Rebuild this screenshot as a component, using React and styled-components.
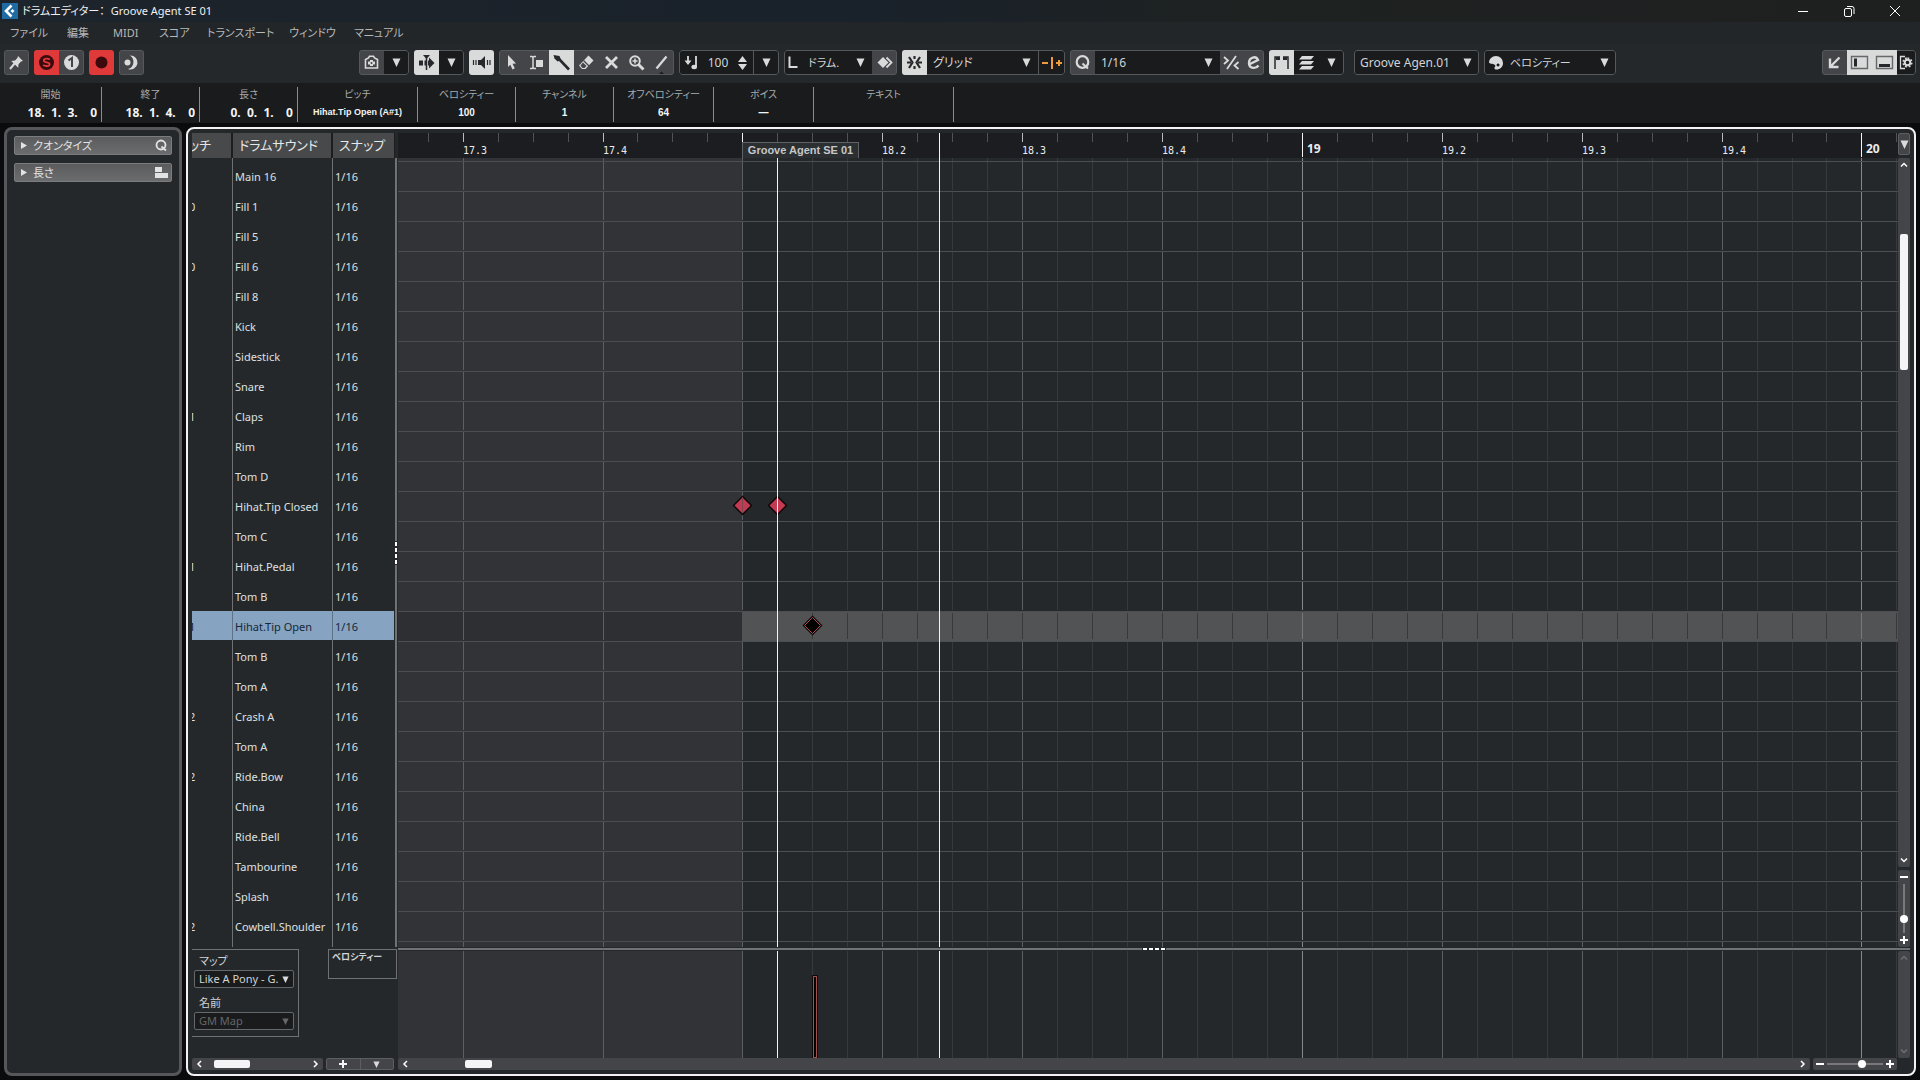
import React from "react";
import styled, { createGlobalStyle, css } from "styled-components";

const color = {
  page: "#0a0b0d",
  chrome: "#25282b",
  info: "#191b1c",
  panel: "#24282b",
  field: "#191b1d",
  button: "#434548",
  edge: "#56595b",
  light: "#d9dada",
  white: "#f5f5f7",
  text: "#d2d3d4",
  muted: "#a9abac",
  red: "#e0393a",
  orange: "#f09a3e",
  ruler: "#1b1d20",
  shaded: "#323336",
  rowLine: "#4c4f51",
  subLine: "#363a3c",
  beatLine: "#5b5f61",
  barLine: "#85888a",
  select: "#86a3c1",
};

const Global = createGlobalStyle`
  * { box-sizing: border-box; }
  body {
    margin: 0;
    background: ${color.page};
    color: ${color.text};
    font-family: "Noto Sans", "Noto Sans CJK JP", sans-serif;
    font-size: 12px;
    line-height: 16px;
    font-feature-settings: "palt";
  }
  button, input, select { font: inherit; font-feature-settings: inherit; color: inherit; margin: 0; padding: 0; }
  button { border: 0; background: none; }
`;

const Window = styled.div`
  min-height: 100vh;
  display: flex;
  flex-direction: column;
`;

/* ---------- title bar and menu ---------- */

const TitleBar = styled.header`
  height: 22px;
  display: flex;
  align-items: center;
  gap: 4px;
  padding: 0 2px;
  background: linear-gradient(90deg, #1d242b, #19212a 45%, #1e2221 65%, #1e2020);
`;

const Title = styled.h1`
  flex: 1;
  display: flex;
  gap: 6px;
  margin: 0;
  font-size: 11px;
  font-weight: 400;
  color: #f0f0f0;
`;

const WindowButtons = styled.div`
  display: flex;
`;

const WindowButton = styled.button`
  width: 46px;
  height: 22px;
  display: grid;
  place-items: center;
`;

const MenuBar = styled.nav`
  height: 22px;
  display: flex;
  align-items: center;
  padding-left: 10px;
  background: #222629;
`;

const MenuButton = styled.button`
  width: ${(p) => p.$w}px;
  text-align: left;
  white-space: nowrap;
  font-size: 11px;
  color: #b6b8b9;
`;

/* ---------- toolbar ---------- */

const Toolbar = styled.div`
  height: 39px;
  display: flex;
  align-items: flex-start;
  padding: 6px 4px 0;
  background: ${color.chrome};
`;

const Tools = styled.div`
  display: flex;
  gap: 5px;
  margin-left: ${(p) => p.$before || 0}px;
`;

const Spacer = styled.div`
  flex: 1;
`;

const Group = styled.div`
  height: 25px;
  width: ${(p) => (p.$w ? p.$w + "px" : "auto")};
  display: flex;
  position: relative;
  overflow: hidden;
  border-radius: 3px;
  background: ${color.field};

  &::after {
    content: "";
    position: absolute;
    inset: 0;
    border: 1px solid ${color.edge};
    border-radius: 3px;
    pointer-events: none;
    display: ${(p) => (p.$bare ? "none" : "block")};
  }
`;

const tones = {
  plain: css`background: ${color.button}; color: ${color.light};`,
  on: css`background: ${color.light}; color: #26292b; position: relative; z-index: 1;`,
  red: css`background: ${color.red}; color: #3a0a0c; position: relative; z-index: 1;`,
  dark: css`background: ${color.field}; color: ${color.light};`,
  orange: css`background: ${color.field}; color: ${color.orange}; border-left: 1px solid ${color.edge};`,
};

const ToolButton = styled.button`
  flex: 0 0 ${(p) => p.$w || 25}px;
  height: 25px;
  display: grid;
  place-items: center;
  ${(p) => tones[p.$tone || "plain"]}
  ${(p) => p.$divided && css`border-left: 1px solid ${color.edge};`}

  svg { display: block; }
`;

const SelectWrap = styled.div`
  flex: 1;
  min-width: 0;
  display: grid;
  align-items: center;
  opacity: ${(p) => (p.$off ? 0.4 : 1)};

  > * { grid-area: 1 / 1; }
  > svg { justify-self: end; margin-right: ${(p) => p.$arrow || 7}px; pointer-events: none; }
`;

const SelectBox = styled.select`
  width: 100%;
  height: 100%;
  appearance: none;
  border: 0;
  outline: 0;
  background: transparent;
  padding-left: ${(p) => p.$pad || 6}px;
  font-size: ${(p) => p.$size || 12}px;
  opacity: 1;
`;

const VelocityInput = styled.input`
  width: 28px;
  border: 0;
  background: transparent;
  text-align: center;
`;

/* ---------- info line ---------- */

const InfoLine = styled.div`
  height: 40px;
  padding: 4px 0 1px;
  display: flex;
  background: ${color.info};
`;

const InfoField = styled.label`
  width: ${(p) => p.$w}px;
  border-right: 1px solid #8a8c8d;
  display: flex;
  flex-direction: column;
  align-items: center;
  color: ${color.muted};
  font-size: 10px;
  line-height: 15px;
`;

const InfoValue = styled.input`
  width: 100%;
  height: 20px;
  border: 0;
  background: transparent;
  padding-right: ${(p) => (p.$time ? 4 : 0)}px;
  text-align: ${(p) => (p.$time ? "right" : "center")};
  font-family: ${(p) => (p.$time ? `"Noto Sans"` : `"Liberation Sans"`)}, sans-serif;
  font-size: ${(p) => (p.$time ? 12 : p.$small ? 9 : 10)}px;
  font-weight: 700;
  color: #f4f4f4;
`;

/* ---------- work area ---------- */

const Work = styled.div`
  flex: 1;
  display: flex;
  gap: 4px;
  padding: 4px;
`;

const Inspector = styled.aside`
  width: 178px;
  border: 3px solid #55575a;
  border-radius: 8px;
  background: ${color.panel};
  padding: 6px 7px;
  display: flex;
  flex-direction: column;
  gap: 8px;
`;

const Section = styled.button`
  height: 19px;
  border: 1px solid #7a7c7e;
  border-radius: 2px;
  background: linear-gradient(#5a5c5e, #6a6c6e);
  display: flex;
  align-items: center;
  gap: 6px;
  padding: 0 3px 0 6px;
  color: #e2e3e4;
  font-size: 11px;
  line-height: 16px;

  span { flex: 1; text-align: left; }
`;

const Editor = styled.main`
  flex: 1;
  min-width: 0;
  border: 2px solid #f3f1f4;
  border-radius: 8px;
  background: ${color.panel};
  padding: 4px;
  display: grid;
  grid-template-columns: 203px 3px minmax(0, 1fr) 12px;
  grid-template-rows: 25px minmax(0, 1fr) 4px 107px 12px;
`;

const ListPane = styled.section`
  grid-column: 1;
  grid-row: 1 / 3;
  overflow: hidden;
  background:
    linear-gradient(#6f7173, #6f7173) 40px 0 / 1px 100% no-repeat,
    linear-gradient(#6f7173, #6f7173) 140px 0 / 1px 100% no-repeat;
`;

const DrumTable = styled.table`
  width: 100%;
  table-layout: fixed;
  border-collapse: separate;
  border-spacing: 0;
  font-size: 11px;
`;

const HeadCell = styled.th`
  width: ${(p) => p.$w}px;
  height: 28px;
  padding: 0;
  vertical-align: top;
  text-align: left;
  font-weight: 400;
`;

const HeadLabel = styled.div`
  height: 25px;
  overflow: hidden;
  padding-left: ${(p) => p.$pad}px;
  border-right: 1px solid #1b1d1f;
  border-left: ${(p) => (p.$first ? 0 : 1)}px solid #1b1d1f;
  background: #47494b;
  font-size: 13px;
  line-height: 24px;
  white-space: nowrap;
  color: #e6e7e8;
`;

/* The pitch column is scrolled to the left, so its texts start outside it. */
const Scrolled = styled.span`
  display: block;
  margin-left: -3px;
`;

const DrumRow = styled.tr`
  height: 30px;
  color: ${(p) => (p.$on ? "#14273a" : "#dfe0e1")};

  td {
    padding: 3px 0 0 2px;
    overflow: hidden;
    border-left: 1px solid ${(p) => (p.$on ? "#5f7387" : "transparent")};
    border-bottom: 1px solid transparent;
    background: ${(p) => (p.$on ? color.select : "transparent")};
    background-clip: padding-box;
    white-space: nowrap;
  }
  td:first-child { padding-left: 0; border-left: 0; }
  td:last-child { border-right: 1px solid transparent; }
`;

const SideSplitter = styled.div`
  grid-column: 2;
  grid-row: 2;
  border-left: 2px solid #707375;
  display: flex;
  flex-direction: column;
  justify-content: center;
  gap: 2px;
`;

const LaneSplitter = styled.div`
  grid-column: 3 / 5;
  grid-row: 3;
  display: flex;
  align-items: center;
  justify-content: center;
  gap: 2px;
  background: linear-gradient(#6f7375, #6f7375) 0 1px / 100% 2px no-repeat;
`;

const GripDot = styled.i`
  width: ${(p) => (p.$tall ? 2 : 4)}px;
  height: ${(p) => (p.$tall ? 4 : 2)}px;
  margin-left: ${(p) => (p.$tall ? -2 : 0)}px;
  background: #fff;
  box-shadow: 0 0 0 1px ${color.panel};
`;

const Ruler = styled.div`
  grid-column: 3;
  grid-row: 1;
  position: relative;
  overflow: hidden;
  background: ${color.ruler};
`;

const RulerMark = styled.span`
  position: absolute;
  top: ${(p) => (p.$bar ? 9 : 11)}px;
  font-family: ${(p) => (p.$bar ? `"Noto Sans"` : `"DejaVu Sans Mono"`)}, monospace;
  font-size: ${(p) => (p.$bar ? 12 : 10)}px;
  font-weight: ${(p) => (p.$bar ? 700 : 400)};
  line-height: 14px;
  color: #ececee;
`;

const PartLabel = styled.div`
  position: absolute;
  top: 9px;
  width: 117px;
  height: 16px;
  border: 1px solid #5f6264;
  border-bottom: 0;
  background: #2b2f31;
  font-family: "Liberation Sans", sans-serif;
  font-size: 11px;
  font-weight: 700;
  line-height: 15px;
  text-align: center;
  white-space: nowrap;
  color: #c5c7c8;
`;

const Canvas = styled.svg`
  grid-column: 3;
  grid-row: ${(p) => p.$row};
  display: block;
  width: 100%;
  height: 100%;
  overflow: hidden;
`;

const RulerTicks = styled.svg`
  display: block;
  width: 100%;
  height: 25px;
`;

const MapPane = styled.section`
  grid-column: 1 / 3;
  grid-row: 3 / 5;
  padding-top: 2px;
  display: flex;
  align-items: flex-start;
  justify-content: space-between;
`;

const MapBox = styled.div`
  width: 107px;
  height: 88px;
  border: 1px solid #6f7173;
  border-left: 0;
  padding: 2px 4px 0 2px;
  display: flex;
  flex-direction: column;
`;

const MapLabel = styled.label`
  padding-left: 5px;
  height: 18px;
  line-height: 18px;
  font-size: 11px;
`;

const MapField = styled.div`
  display: flex;
  height: 19px;
  margin-bottom: 6px;
  border: 1px solid #66696b;
  border-radius: 2px;
  background: ${color.field};
`;

const LaneBox = styled.div`
  width: 69px;
  height: 30px;
  margin-right: 1px;
  border: 1px solid #6f7173;
  padding-left: 3px;
  font-size: 9px;
  line-height: 14px;
  font-weight: 700;
`;

/* ---------- scroll bars and zoom ---------- */

const SideColumn = styled.div`
  grid-column: 4;
  grid-row: ${(p) => p.$row};
  display: flex;
  flex-direction: column;
  gap: 3px;
`;

const MenuDrop = styled.button`
  height: 22px;
  border: 1px solid #5c5e60;
  border-radius: 2px;
  background: ${color.button};
  color: ${color.light};
  display: grid;
  place-items: center;
`;

const ScrollV = styled.div`
  flex: 1;
  min-height: 0;
  display: flex;
  flex-direction: column;
  background: ${color.button};
  border-radius: 2px;
  color: ${(p) => (p.$off ? "#6d7072" : "#fff")};
`;

const ScrollH = styled.div`
  flex: ${(p) => (p.$w ? `0 0 ${p.$w}px` : 1)};
  display: flex;
  align-items: center;
  background: ${color.button};
  border-radius: 2px;
  color: #fff;
`;

const ScrollButton = styled.button`
  flex: 0 0 14px;
  display: grid;
  place-items: center;
`;

const Track = styled.div`
  flex: 1;
  min-width: 0;
  min-height: 0;
  display: flex;
  flex-direction: ${(p) => (p.$v ? "column" : "row")};
  align-items: center;

  &::before { content: ""; flex: 0 0 ${(p) => p.$start}; }
`;

const Thumb = styled.div`
  flex: 0 0 ${(p) => p.$size};
  ${(p) => (p.$v ? "width" : "height")}: 8px;
  border-radius: 2px;
  background: ${color.white};
`;

const FootLeft = styled.div`
  grid-column: 1 / 3;
  grid-row: 5;
  display: flex;
  gap: 3px;
  padding-right: 4px;
`;

const FootRight = styled.div`
  grid-column: 3 / 5;
  grid-row: 5;
  display: flex;
  gap: 3px;
  padding-right: 13px;
`;

const LaneButtons = styled.div`
  flex: 1;
  display: flex;
  border: 1px solid #5c5e60;
  border-radius: 2px;
  background: ${color.button};
  color: ${color.white};

  button { flex: 1; display: grid; place-items: center; }
  button + button { border-left: 1px solid #5c5e60; }
`;

const Zoom = styled.div`
  flex: 0 0 ${(p) => (p.$v ? 77 : 84)}px;
  min-width: 0;
  min-height: 0;
  display: flex;
  flex-direction: ${(p) => (p.$v ? "column" : "row")};
  align-items: center;
  background: ${color.button};
  border-radius: 2px;
  color: #fff;
`;

const ZoomRange = styled.input`
  flex: 1;
  min-width: 0;
  min-height: 0;
  appearance: none;
  background: transparent;
  ${(p) =>
    p.$v
      ? css`writing-mode: vertical-lr; width: 12px;`
      : css`width: 56px; height: 12px;`}

  &::-webkit-slider-runnable-track {
    background: #77797b;
    ${(p) => (p.$v ? "width" : "height")}: 2px;
  }
  &::-webkit-slider-thumb {
    appearance: none;
    width: 8px;
    height: 8px;
    border-radius: 50%;
    background: #fff;
    ${(p) => (p.$v ? "margin-left" : "margin-top")}: -3px;
  }
`;

/* ---------- icons ---------- */

const Arrow = ({ small }) => (
  <svg width={small ? 7 : 9} height={small ? 7 : 9} viewBox="0 0 9 9" fill={color.light}>
    <path d="M0.5 0.5h8L4.5 9z" />
  </svg>
);

const Icon = ({ children, w = 25 }) => (
  <svg width={w} height="25" viewBox={`0 0 ${w} 25`} fill="none" stroke="currentColor" strokeWidth="2">
    {children}
  </svg>
);

const icons = {
  pin: (
    <Icon>
      <path d="M6 19l5-6" />
      <path fill="currentColor" stroke="none" d="M14 6l5 5-2 .6-2.5 2.6-.3 3.6-7-6.8 3.8-.4L13.4 8z" />
    </Icon>
  ),
  solo: (
    <Icon>
      <circle cx="12.5" cy="12.500" r="7.500" fill="currentColor" stroke="none" />
      <path stroke={color.red} strokeWidth="1.800" d="M15.800 9.600c-1-1.200-6-1.700-6 .8 0 2.600 5.800 1.300 5.800 3.800 0 2.400-5 2.200-6.400.7" />
    </Icon>
  ),
  one: (
    <Icon>
      <circle cx="12.5" cy="12.500" r="7.500" fill="currentColor" stroke="none" />
      <path stroke={color.button} d="M9.500 10.500l3.500-2.500v9" />
    </Icon>
  ),
  record: <Icon><circle cx="12.5" cy="12.500" r="6" fill="currentColor" stroke="none" /></Icon>,
  moon: (
    <Icon>
      <path fill="currentColor" stroke="none" d="M11 5.500a7 7 0 1 1-2 13.500 7.500 7.500 0 0 0 2-13.500z" />
      <circle cx="8.5" cy="12.500" r="3" fill="currentColor" stroke="none" />
    </Icon>
  ),
  camera: (
    <Icon>
      <path strokeWidth="1.600" d="M6.500 18V9.500l3-1.500 1-1.800h4l1 1.800 3 1.500V18z" />
      <path strokeWidth="3" strokeDasharray="3 1" d="M9 13h7" />
      <path strokeWidth="3" d="M12.500 10v6" />
      <circle cx="12.5" cy="13" r="1" fill={color.button} stroke="none" />
    </Icon>
  ),
  autoscroll: (
    <Icon>
      <path strokeWidth="5" d="M5 13h4M10.500 13h1.500M14 13h2" />
      <path fill="currentColor" stroke="none" d="M15 7.500l5.500 5.500-5.500 5.500z" />
      <path fill="currentColor" stroke="none" d="M9 5h7l-3.500 4z" />
      <path strokeWidth="1.500" d="M12.500 7v13" />
    </Icon>
  ),
  speaker: (
    <Icon>
      <path strokeWidth="1.200" d="M4.500 10v5M7 10v5M18.500 10v5M21 10v5" />
      <path fill="currentColor" stroke="none" d="M9 10h3l4-4v13l-4-4H9z" />
    </Icon>
  ),
  pointer: <Icon><path fill="currentColor" stroke="none" d="M9 5l8 8.500-3.500.3 2.300 4.500-2.300 1.100-2.200-4.600L9 17z" /></Icon>,
  range: (
    <Icon>
      <path strokeWidth="1.500" d="M6 6.500h2l1 1 1-1h2M6 18.500h2l1-1 1 1h2M9 7v11" />
      <path fill="currentColor" stroke="none" d="M12 10h7v7h-7z" />
    </Icon>
  ),
  draw: (
    <Icon>
      <path strokeWidth="2.600" d="M10 9l10 10.500" />
      <path fill="currentColor" stroke="none" d="M4.500 5l6 1 1.500 4-3.500 1.500-3-3z" />
    </Icon>
  ),
  erase: (
    <Icon>
      <path fill="currentColor" stroke="none" d="M14.500 5.500l5 5-8 8.500H8l-3-3.500z" />
      <path stroke={color.button} strokeWidth="1.200" d="M9.500 10.500l5.500 5.500" />
      <path fill={color.button} stroke="none" d="M9 12.500l3.500 3.500-2 2h-2l-2-2.400z" />
    </Icon>
  ),
  mute: <Icon><path strokeWidth="2.800" d="M7 7l11 11M18 7L7 18" /></Icon>,
  zoom: (
    <Icon>
      <circle cx="11" cy="11" r="4.800" fill="none" />
      <path strokeWidth="1.600" d="M8.500 11h5M11 8.500v5" />
      <path strokeWidth="3" d="M14.500 14.500l5 5" />
    </Icon>
  ),
  line: (
    <Icon>
      <path strokeWidth="2.200" d="M7.500 18.500l10-12" />
      <path fill="#1b1d1f" stroke="none" d="M9 25l3.500-3.500L16 25z" />
    </Icon>
  ),
  velocity: (
    <Icon>
      <path strokeWidth="1.800" d="M9 6v6M17 6v11" />
      <path fill="currentColor" stroke="none" d="M5.500 10.500h7L9 15z" />
      <ellipse cx="15.200" cy="17" rx="2.800" ry="2.200" fill="currentColor" stroke="none" />
    </Icon>
  ),
  length: <Icon w={18}><path d="M5.500 6.500v10.500h8" /></Icon>,
  drumstick: (
    <Icon>
      <path fill="currentColor" stroke="none" d="M11 7l5.500 5.500L11 18l-5.500-5.500z" />
      <path strokeWidth="1.800" d="M14.500 7.500l5 5-5 5" />
    </Icon>
  ),
  snap: (
    <Icon>
      <path strokeWidth="2.200" d="M7 7l3.500 5.500L7 18M18 7l-3.500 5.500L18 18M12.500 6v3M12.500 16v3M5 12.500h4M16 12.500h4" />
    </Icon>
  ),
  snapType: (
    <Icon w={26}>
      <path d="M3 13h6M13 7v12M17 13h6M20 10v6" />
    </Icon>
  ),
  quantize: (
    <Icon>
      <circle cx="12.500" cy="12" r="5.800" strokeWidth="2.200" />
      <path d="M12.500 13.500l5.500 5" />
    </Icon>
  ),
  iq: (
    <Icon w={22}>
      <path strokeWidth="1.800" d="M16 6L7 19M4 7l4 3.500L4 14M18.500 12l-4 3.500 4 3.500" />
    </Icon>
  ),
  edit: (
    <Icon w={22}>
      <path strokeWidth="2.400" d="M7 14.500l9-4.500c-2-4.500-9-3-9 3 0 6 7 6 9.500 2.500" />
    </Icon>
  ),
  parts: (
    <Icon>
      <path strokeWidth="1.500" d="M6 19V7h5M19 19V7h-5" />
      <path strokeWidth="3" d="M7 8.500h4M18 8.500h-4" />
    </Icon>
  ),
  lanes: (
    <Icon>
      <path fill="currentColor" stroke="none" d="M8 6h12l-3 3.500H5zM8 11h12l-3 3.500H5zM8 16h12l-3 3.500H5z" />
    </Icon>
  ),
  palette: (
    <Icon w={22}>
      <path
        fill="currentColor"
        stroke="none"
        fillRule="evenodd"
        d="M12 6a7 7 0 0 1 7 7c0 4-3 6.500-6.500 6.500-3 0-2-2.500-1-3.500-1-3-5.500-1.500-6.500-3.500C5 9 8 6 12 6zM14 13.500a1.500 1.500 0 1 0 .1 0z"
      />
    </Icon>
  ),
  corner: <Icon><path strokeWidth="2.400" d="M17.500 7.500l-9 9M8 8.500V17h8.500" /></Icon>,
  leftZone: (
    <Icon>
      <path strokeWidth="1.400" stroke="#66686a" d="M4.500 6.500h16v12h-16z" />
      <path strokeWidth="3" d="M8.500 8.500v8" />
    </Icon>
  ),
  lowerZone: (
    <Icon>
      <path strokeWidth="1.400" stroke="#66686a" d="M4.500 6.500h16v12h-16z" />
      <path strokeWidth="3" d="M7 15.500h11" />
    </Icon>
  ),
  setup: (
    <Icon w={19}>
      <path strokeWidth="1.300" d="M8 6.500H3.500v12H8" />
      <circle cx="10.500" cy="12.500" r="2.800" />
      <path strokeWidth="1.600" strokeDasharray="1.800 1.700" d="M10.500 8.100a4.400 4.400 0 1 1-.1 0" />
    </Icon>
  ),
};

const Chevron = ({ dir }) => {
  const d = { left: "M6 1L3 4l3 3", right: "M2 1l3 3-3 3", up: "M1 5.500l3-3 3 3", down: "M1 2.500l3 3 3-3" }[dir];
  return (
    <svg width="8" height="8" viewBox="0 0 8 8" fill="none" stroke="currentColor" strokeWidth="1.500"><path d={d} /></svg>
  );
};

const Sign = ({ plus }) => (
  <svg width="8" height="8" viewBox="0 0 8 8" stroke="currentColor" strokeWidth="2">
    <path d={plus ? "M0 4h8M4 0v8" : "M0 4h8"} />
  </svg>
);

const Logo = () => (
  <svg width="16" height="16" viewBox="0 0 16 16">
    <rect width="16" height="16" fill="#1f6ba3" />
    <path d="M9.500 2.500L4 8l5.500 5.500" fill="none" stroke="#fff" strokeWidth="2.600" />
    <path d="M10.500 6l2 2-2 2-2-2z" fill="#fff" />
  </svg>
);

/* ---------- data ---------- */

const menus = [
  ["ファイル", 57],
  ["編集", 46],
  ["MIDI", 46],
  ["スコア", 48],
  ["トランスポート", 82],
  ["ウィンドウ", 65],
  ["マニュアル", 50],
];

const info = [
  { label: "開始", value: "18.  1.  3.    0", w: 102, time: true },
  { label: "終了", value: "18.  1.  4.    0", w: 98, time: true },
  { label: "長さ", value: "0.  0.  1.    0", w: 98, time: true },
  { label: "ピッチ", value: "Hihat.Tip Open (A#1)", w: 120, small: true },
  { label: "ベロシティー", value: "100", w: 98 },
  { label: "チャンネル", value: "1", w: 98 },
  { label: "オフベロシティー", value: "64", w: 100 },
  { label: "ボイス", value: "—", w: 100 },
  { label: "テキスト", value: "", w: 140 },
];

const drums = [
  ["", "Main 16"], ["0", "Fill 1"], ["", "Fill 5"], ["0", "Fill 6"], ["", "Fill 8"], ["", "Kick"],
  ["", "Sidestick"], ["", "Snare"], ["1", "Claps"], ["", "Rim"], ["", "Tom D"], ["", "Hihat.Tip Closed"],
  ["", "Tom C"], ["1", "Hihat.Pedal"], ["", "Tom B"], ["1", "Hihat.Tip Open"], ["", "Tom B"], ["", "Tom A"],
  ["2", "Crash A"], ["", "Tom A"], ["2", "Ride.Bow"], ["", "China"], ["", "Ride.Bell"], ["", "Tambourine"],
  ["", "Splash"], ["2", "Cowbell.Shoulder"],
];
const selectedRow = 15;

/* Time axis: step 0 is the start of the part, one step is a sixteenth. */
const stepX = (step) => Math.round(344.4 + step * 34.97);
const steps = Array.from({ length: 43 }, (_, i) => i - 9);
const isBar = (s) => s === 0 || s === 16 || s === 32;
const isBeat = (s) => s % 4 === 0;
const locators = [stepX(1), 541];
const marks = [
  [-8, "17.3"], [-4, "17.4"], [4, "18.2"], [8, "18.3"], [12, "18.4"],
  [16, "19"], [20, "19.2"], [24, "19.3"], [28, "19.4"], [32, "20"],
];

const lineColor = (s) =>
  s > 0 && isBar(s) ? color.barLine : isBeat(s) ? color.beatLine : color.subLine;

const gridSteps = steps.filter((s) => s >= 0 || isBeat(s));

function Note({ step, row, selected }) {
  const x = stepX(step) + 0.5;
  const y = 3 + row * 30 + 14.5;
  return (
    <g>
      <path d={`M${x} ${y - 10}l10 10-10 10-10-10z`} fill="#0d0506" />
      <path
        d={`M${x} ${y - 8}l8 8-8 8-8-8z`}
        fill={selected ? "#000" : "#c23b52"}
        stroke={selected ? "#b0475a" : "none"}
      />
    </g>
  );
}

function NoteGrid() {
  return (
    <Canvas $row={2} role="img" aria-label="notes">
      <rect width={stepX(0)} height="100%" fill={color.shaded} />
      <rect y="453" width={stepX(0)} height="30" fill="#2d2f32" />
      {gridSteps.map((s) => (
        <g key={s} stroke={lineColor(s)}>
          <path d={`M${stepX(s) + 0.5} 0v3`} />
          <line x1={stepX(s) + 0.5} x2={stepX(s) + 0.5} y1="4" y2="100%" strokeDasharray="28 2" />
        </g>
      ))}
      <rect x={stepX(0)} y="453" width="100%" height="30" fill="#525354" />
      {gridSteps.filter((s) => s > 1).map((s) => (
        <rect key={s} x={stepX(s)} y="455" width="1" height="26" fill={isBar(s) ? "#77797a" : "#37393a"} />
      ))}
      {Array.from({ length: drums.length + 1 }, (_, i) => (
        <rect key={i} y={3 + i * 30} width="100%" height="1" fill={color.rowLine} />
      ))}
      <Note step={0} row={11} />
      <Note step={1} row={11} />
      <Note step={2} row={15} selected />
      <rect x={stepX(0)} y="339" width="1" height="16" fill="#7c4550" />
      {locators.map((x) => <rect key={x} x={x} width="1" height="100%" fill="#f2f4f5" />)}
    </Canvas>
  );
}

function VelocityLane() {
  return (
    <Canvas $row={4} role="img" aria-label="velocity">
      <rect width={stepX(0)} height="100%" fill={color.shaded} />
      {gridSteps.map((s) => (
        <rect key={s} x={stepX(s)} width="1" height="100%" fill={lineColor(s)} />
      ))}
      {locators.map((x) => <rect key={x} x={x} width="1" height="100%" fill="#f2f4f5" />)}
      <rect x={stepX(2)} y="24" width="6" height="83" fill="#12080a" />
      <rect x={stepX(2) + 1.5} y="25.500" width="3" height="81" fill="#000" stroke="#a4504c" />
    </Canvas>
  );
}

function TimeRuler() {
  return (
    <Ruler>
      <RulerTicks>
        {steps.map((s) => (
          <rect
            key={s}
            x={stepX(s)}
            width="1"
            height={isBar(s) ? 24 : 9}
            fill={isBar(s) ? "#f4f4f5" : isBeat(s) ? "#b9bbbd" : "#505355"}
          />
        ))}
        <rect x={locators[1]} width="1" height="25" fill="#f2f4f5" />
      </RulerTicks>
      <PartLabel style={{ left: stepX(0) }}>Groove Agent SE 01</PartLabel>
      {marks.map(([s, text]) => (
        <RulerMark key={s} $bar={isBar(s)} style={{ left: stepX(s) + (isBar(s) ? 5 : 0) }}>{text}</RulerMark>
      ))}
    </Ruler>
  );
}

function Select({ label, value, id, off, pad, size, arrow, small }) {
  return (
    <SelectWrap $off={off} $arrow={arrow}>
      <SelectBox id={id} aria-label={id ? undefined : label} disabled={off} $pad={pad} $size={size}>
        <option>{value}</option>
      </SelectBox>
      <Arrow small={small} />
    </SelectWrap>
  );
}

const Tool = ({ name, label, ...rest }) => (
  <ToolButton aria-label={label || name} {...rest}>{icons[name]}</ToolButton>
);

const Drop = ({ label, divided }) => (
  <ToolButton $tone="dark" $divided={divided} aria-label={label}><Arrow /></ToolButton>
);

export default function App() {
  return (
    <Window>
      <Global />
      <TitleBar>
        <Logo />
        <Title><span>ドラムエディター：</span><span>Groove Agent SE 01</span></Title>
        <WindowButtons>
          <WindowButton aria-label="minimize">
            <svg width="10" height="10"><path d="M0 5.500h10" stroke="#fff" /></svg>
          </WindowButton>
          <WindowButton aria-label="restore">
            <svg width="11" height="11" fill="none" stroke="#fff">
              <rect x="0.500" y="2.500" width="7" height="8" rx="1.500" />
              <path d="M3 .5h5a2 2 0 0 1 2 2V8" />
            </svg>
          </WindowButton>
          <WindowButton aria-label="close">
            <svg width="10" height="10"><path d="M0 0l10 10M10 0L0 10" stroke="#fff" /></svg>
          </WindowButton>
        </WindowButtons>
      </TitleBar>
      <MenuBar>
        {menus.map(([text, w]) => <MenuButton key={text} $w={w}>{text}</MenuButton>)}
      </MenuBar>

      <Toolbar>
        <Tools>
          <Group><Tool name="pin" /></Group>
          <Group><Tool name="solo" $tone="red" /><Tool name="one" /></Group>
          <Group $bare><Tool name="record" $tone="red" /></Group>
          <Group><Tool name="moon" /></Group>
        </Tools>
        <Tools $before={215}>
          <Group><Tool name="camera" /><Drop label="camera menu" /></Group>
          <Group><Tool name="autoscroll" $tone="on" /><Drop label="autoscroll menu" /></Group>
          <Group $bare><Tool name="speaker" $tone="on" /></Group>
          <Group>
            <Tool name="pointer" />
            <Tool name="range" />
            <Tool name="draw" $tone="on" />
            <Tool name="erase" />
            <Tool name="mute" />
            <Tool name="zoom" />
            <Tool name="line" />
          </Group>
          <Group $w={100}>
            <Tool name="velocity" $tone="dark" />
            <VelocityInput aria-label="insert velocity" defaultValue="100" />
            <ToolButton $tone="dark" $w={21} aria-label="step velocity">
              <svg width="9" height="14" fill={color.light}><path d="M4.500 0L9 6H0zM4.500 14L9 8H0z" /></svg>
            </ToolButton>
            <Drop label="velocity menu" divided />
          </Group>
          <Group $w={113}>
            <Tool name="length" $tone="dark" $w={18} />
            <Select label="note length" value="ドラム." pad={6} size={11} />
            <Tool name="drumstick" />
          </Group>
          <Group $w={163}>
            <Tool name="snap" $tone="on" />
            <Select label="snap type" value="グリッド" />
            <Tool name="snapType" $tone="orange" $w={26} />
          </Group>
          <Group $w={194}>
            <Tool name="quantize" />
            <Select label="quantize preset" value="1/16" />
            <Tool name="iq" $w={22} />
            <Tool name="edit" $w={22} />
          </Group>
          <Group><Tool name="parts" $tone="on" /><Tool name="lanes" $tone="dark" /><Drop label="lane menu" /></Group>
        </Tools>
        <Tools $before={10}>
          <Group $w={125}><Select label="part" value="Groove Agen.01" /></Group>
          <Group $w={132}>
            <Tool name="palette" $tone="dark" $w={22} />
            <Select label="event colors" value="ベロシティー" pad={4} size={11} />
          </Group>
        </Tools>
        <Spacer />
        <Group>
          <Tool name="corner" />
          <Tool name="leftZone" $tone="on" />
          <Tool name="lowerZone" $tone="on" />
          <Tool name="setup" $tone="dark" $w={19} />
        </Group>
      </Toolbar>

      <InfoLine>
        {info.map((f) => (
          <InfoField key={f.label} $w={f.w}>
            {f.label}
            <InfoValue defaultValue={f.value} $time={f.time} $small={f.small} />
          </InfoField>
        ))}
      </InfoLine>

      <Work>
        <Inspector>
          <Section>
            <svg width="6" height="7" fill="currentColor"><path d="M0 0l6 3.500L0 7z" /></svg>
            <span>クオンタイズ</span>
            <svg width="13" height="13" fill="none" stroke="currentColor" strokeWidth="1.800">
              <circle cx="6" cy="6" r="4.500" /><path d="M6.500 7.500l4.500 4" />
            </svg>
          </Section>
          <Section>
            <svg width="6" height="7" fill="currentColor"><path d="M0 0l6 3.500L0 7z" /></svg>
            <span>長さ</span>
            <svg width="13" height="11" fill="currentColor"><path d="M0 0h7v5H0zM0 6h13v5H0z" /></svg>
          </Section>
        </Inspector>

        <Editor>
          <ListPane>
            <DrumTable>
              <thead>
                <tr>
                  <HeadCell $w={40}><HeadLabel $first><Scrolled>ッチ</Scrolled></HeadLabel></HeadCell>
                  <HeadCell $w={100}><HeadLabel $pad={6}>ドラムサウンド</HeadLabel></HeadCell>
                  <HeadCell $w={63}><HeadLabel $pad={6}>スナップ</HeadLabel></HeadCell>
                </tr>
              </thead>
              <tbody>
                {drums.map(([pitch, name], i) => (
                  <DrumRow key={i} $on={i === selectedRow}>
                    <td><Scrolled>{pitch}</Scrolled></td>
                    <td>{name}</td>
                    <td>1/16</td>
                  </DrumRow>
                ))}
              </tbody>
            </DrumTable>
          </ListPane>
          <SideSplitter>
            {[0, 1, 2, 3].map((i) => <GripDot key={i} $tall />)}
          </SideSplitter>

          <TimeRuler />
          <SideColumn $row={1}><MenuDrop aria-label="ruler menu"><Arrow /></MenuDrop></SideColumn>

          <NoteGrid />
          <SideColumn $row={2}>
            <ScrollV>
              <ScrollButton aria-label="scroll up"><Chevron dir="up" /></ScrollButton>
              <Track $v $start="9.1%"><Thumb $v $size="20%" /></Track>
              <ScrollButton aria-label="scroll down"><Chevron dir="down" /></ScrollButton>
            </ScrollV>
            <Zoom $v>
              <ScrollButton aria-label="zoom out rows"><Sign /></ScrollButton>
              <ZoomRange $v type="range" aria-label="row height" defaultValue="75" />
              <ScrollButton aria-label="zoom in rows"><Sign plus /></ScrollButton>
            </Zoom>
          </SideColumn>

          <LaneSplitter>
            {[0, 1, 2, 3].map((i) => <GripDot key={i} />)}
          </LaneSplitter>

          <MapPane>
            <MapBox>
              <MapLabel htmlFor="map">マップ</MapLabel>
              <MapField><Select id="map" value="Like A Pony - G." pad={4} size={11} arrow={4} small /></MapField>
              <MapLabel htmlFor="names">名前</MapLabel>
              <MapField><Select id="names" value="GM Map" pad={4} size={11} arrow={4} small off /></MapField>
            </MapBox>
            <LaneBox>ベロシティー</LaneBox>
          </MapPane>
          <VelocityLane />
          <SideColumn $row={4}>
            <ScrollV $off>
              <ScrollButton aria-label="lane up"><Chevron dir="up" /></ScrollButton>
              <Track $v $start="0" />
              <ScrollButton aria-label="lane down"><Chevron dir="down" /></ScrollButton>
            </ScrollV>
          </SideColumn>

          <FootLeft>
            <ScrollH $w={131}>
              <ScrollButton aria-label="list left"><Chevron dir="left" /></ScrollButton>
              <Track $start="8%"><Thumb $size="35%" /></Track>
              <ScrollButton aria-label="list right"><Chevron dir="right" /></ScrollButton>
            </ScrollH>
            <LaneButtons>
              <button aria-label="add lane"><Sign plus /></button>
              <button aria-label="lane presets"><Arrow small /></button>
            </LaneButtons>
          </FootLeft>
          <FootRight>
            <ScrollH>
              <ScrollButton aria-label="scroll left"><Chevron dir="left" /></ScrollButton>
              <Track $start="3.8%"><Thumb $size="2%" /></Track>
              <ScrollButton aria-label="scroll right"><Chevron dir="right" /></ScrollButton>
            </ScrollH>
            <Zoom>
              <ScrollButton aria-label="zoom out"><Sign /></ScrollButton>
              <ZoomRange type="range" aria-label="time zoom" defaultValue="64" />
              <ScrollButton aria-label="zoom in"><Sign plus /></ScrollButton>
            </Zoom>
          </FootRight>
        </Editor>
      </Work>
    </Window>
  );
}
